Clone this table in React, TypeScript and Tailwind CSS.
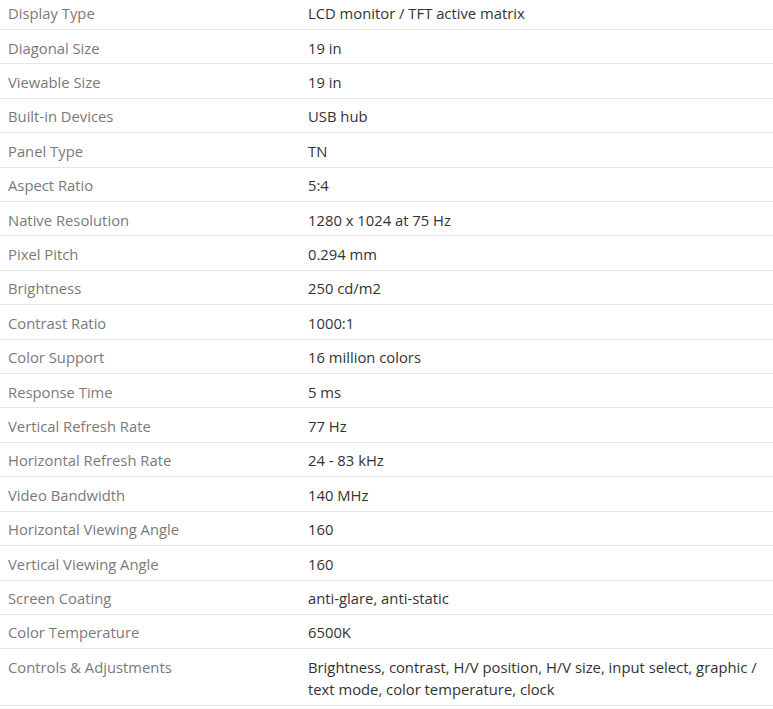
const rows: [string, string][] = [
  ["Display Type", "LCD monitor / TFT active matrix"],
  ["Diagonal Size", "19 in"],
  ["Viewable Size", "19 in"],
  ["Built-in Devices", "USB hub"],
  ["Panel Type", "TN"],
  ["Aspect Ratio", "5:4"],
  ["Native Resolution", "1280 x 1024 at 75 Hz"],
  ["Pixel Pitch", "0.294 mm"],
  ["Brightness", "250 cd/m2"],
  ["Contrast Ratio", "1000:1"],
  ["Color Support", "16 million colors"],
  ["Response Time", "5 ms"],
  ["Vertical Refresh Rate", "77 Hz"],
  ["Horizontal Refresh Rate", "24 - 83 kHz"],
  ["Video Bandwidth", "140 MHz"],
  ["Horizontal Viewing Angle", "160"],
  ["Vertical Viewing Angle", "160"],
  ["Screen Coating", "anti-glare, anti-static"],
  ["Color Temperature", "6500K"],
  ["Controls & Adjustments", "Brightness, contrast, H/V position, H/V size, input select, graphic / text mode, color temperature, clock"],
];

export default function App() {
  return (
    <div className="w-[773px] h-[709px] overflow-hidden bg-white" style={{ fontFamily: '"Open Sans", sans-serif' }}>
      <div className="mt-[-4.4px]">
        {rows.map(([k, v]) => (
          <div key={k} className="flex border-b border-[#e6e6e6] pt-[6.5px] pb-[4.5px] text-[14.8px] leading-[22.4px]">
            <div className="w-[308px] shrink-0 pl-[8px] text-[#7a7a7a]">{k}</div>
            <div className="w-[460px] text-[#333]">{v}</div>
          </div>
        ))}
      </div>
    </div>
  );
}
